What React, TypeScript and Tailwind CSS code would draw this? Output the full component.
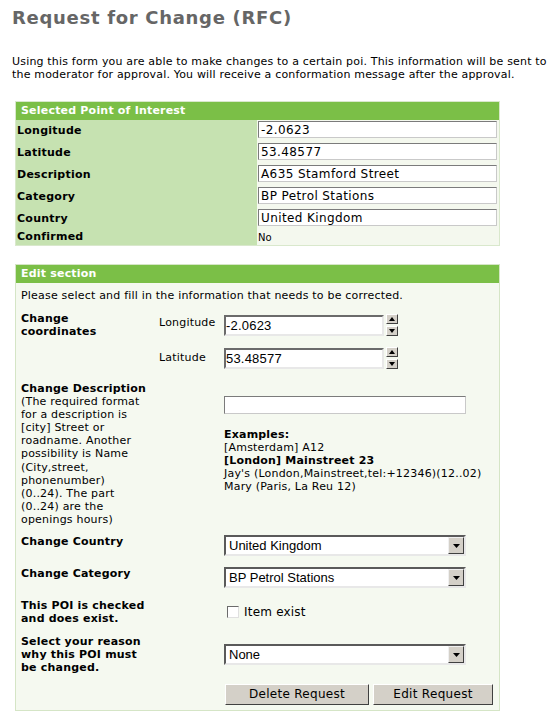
import React from "react";

const verdana = { fontFamily: '"DejaVu Sans", Verdana, sans-serif' };
const arial = { fontFamily: '"Liberation Sans", Arial, sans-serif' };

function InfoRow({ label, value }: { label: string; value: string }) {
  return (
    <div className="flex h-[22px]">
      <div className="w-[241px] bg-[#c6e2b1] pl-[1px] flex items-center font-bold text-[11px] tracking-[0.25px] text-black">
        {label}
      </div>
      <div className="flex-1 bg-[#f4f8ee] pt-[1px] pl-[1px] pr-[2px]">
        <div className="w-full h-[17px] bg-white border border-t-[#7b7b7b] border-l-[#7b7b7b] border-r-[#c9c9c9] border-b-[#c9c9c9] flex items-center pl-[2px] text-[12px] tracking-[0.4px] text-black">
          {value}
        </div>
      </div>
    </div>
  );
}

function SpinInput({ value }: { value: string }) {
  return (
    <div className="flex items-center gap-[2px]">
      <div
        className="w-[160px] h-[21px] bg-white border-2 border-t-[#6b6b6b] border-l-[#6b6b6b] border-r-[#e8e8e8] border-b-[#e8e8e8] flex items-center text-[13px] text-black"
        style={arial}
      >
        {value}
      </div>
      <div className="flex flex-col gap-[2px]">
        <SpinButton up />
        <SpinButton />
      </div>
    </div>
  );
}

function SpinButton({ up }: { up?: boolean }) {
  return (
    <div className="w-[12px] h-[10px] bg-[#d4d0c8] border border-t-white border-l-white border-r-[#404040] border-b-[#404040] flex items-center justify-center">
      <svg width="6" height="4" viewBox="0 0 6 4">
        {up ? <path d="M3 0 L6 4 L0 4 Z" fill="#000" /> : <path d="M0 0 L6 0 L3 4 Z" fill="#000" />}
      </svg>
    </div>
  );
}

function Select({ value }: { value: string }) {
  return (
    <div className="w-[242px] h-[21px] bg-white border-2 border-t-[#5a5a5a] border-l-[#5a5a5a] border-r-[#e8e8e8] border-b-[#e8e8e8] flex items-center">
      <span className="flex-1 pl-[3px] text-[13px] text-black tracking-normal" style={arial}>
        {value}
      </span>
      <div className="w-[16px] h-[17px] bg-[#d4d0c8] border border-t-[#f0f0f0] border-l-[#f0f0f0] border-r-[#404040] border-b-[#404040] flex items-center justify-center">
        <svg width="7" height="4" viewBox="0 0 7 4">
          <path d="M0 0 L7 0 L3.5 4 Z" fill="#000" />
        </svg>
      </div>
    </div>
  );
}

function Button({ label, width }: { label: string; width: string }) {
  return (
    <button
      className={`${width} h-[21px] bg-[#d4d0c8] border border-t-white border-l-white border-r-[#404040] border-b-[#404040] text-[12px] tracking-[0.3px] text-black`}
      style={verdana}
    >
      {label}
    </button>
  );
}

export default function App() {
  return (
    <div className="w-[556px] min-h-[727px] bg-white text-black" style={verdana}>
      <h1 className="pl-[12px] pt-[7px] text-[18px] leading-[22px] tracking-[0.7px] font-bold text-[#666666]">
        Request for Change (RFC)
      </h1>
      <p className="pl-[12px] mt-[26px] text-[11px] leading-[13px] tracking-[0.18px]">
        Using this form you are able to make changes to a certain poi. This information will be sent to
        <br />
        the moderator for approval. You will receive a conformation message after the approval.
      </p>

      {/* selected poi */}
      <div className="ml-[15px] mt-[20px] w-[485px] border border-[#d9e8cc]">
        <div className="h-[18px] bg-[#7bbf47] pl-[5px] flex items-center text-white font-bold text-[11px] tracking-[0.2px]">
          Selected Point of Interest
        </div>
        <InfoRow label="Longitude" value="-2.0623" />
        <InfoRow label="Latitude" value="53.48577" />
        <InfoRow label="Description" value="A635 Stamford Street" />
        <InfoRow label="Category" value="BP Petrol Stations" />
        <InfoRow label="Country" value="United Kingdom" />
        <div className="flex h-[15px]">
          <div className="w-[241px] bg-[#c6e2b1] pl-[1px] flex items-center font-bold text-[11px] tracking-[0.25px]">
            Confirmed
          </div>
          <div className="flex-1 bg-[#f4f8ee] flex items-center pl-[1px] text-[10px]">No</div>
        </div>
      </div>

      {/* edit section */}
      <div className="ml-[15px] mt-[18px] w-[485px] border border-[#d5e5c6] bg-[#f5f9f0]">
        <div className="h-[18px] bg-[#7bbf47] pl-[5px] flex items-center text-white font-bold text-[11px] tracking-[0.2px]">
          Edit section
        </div>
        <div className="pl-[5px] pr-[5px] pt-[6px] pb-[5px] text-[11px] leading-[13px] tracking-[0.2px]">
          <p>Please select and fill in the information that needs to be corrected.</p>

          <div className="mt-[10px] grid grid-cols-[138px_65px_1fr]">
            <div className="font-bold">
              Change
              <br />
              coordinates
            </div>
            <div className="h-[21px] flex items-center">Longitude</div>
            <SpinInput value="-2.0623" />

            <div />
            <div className="mt-[9px] h-[21px] flex items-center">Latitude</div>
            <div className="mt-[9px]">
              <SpinInput value="53.48577" />
            </div>
          </div>

          <div className="mt-[13px] grid grid-cols-[203px_1fr]">
            <div className="leading-[13.1px]">
              <span className="font-bold">Change Description</span>
              <br />
              (The required format
              <br />
              for a description is
              <br />
              [city] Street or
              <br />
              roadname. Another
              <br />
              possibility is Name
              <br />
              (City,street,
              <br />
              phonenumber)
              <br />
              (0..24). The part
              <br />
              (0..24) are the
              <br />
              openings hours)
            </div>
            <div>
              <div className="mt-[14px] w-[242px] h-[18px] bg-white border border-t-[#7b7b7b] border-l-[#7b7b7b] border-r-[#c9c9c9] border-b-[#c9c9c9]" />
              <div className="mt-[14px]">
                <span className="font-bold">Examples:</span>
                <br />
                [Amsterdam] A12
                <br />
                <span className="font-bold">[London] Mainstreet 23</span>
                <br />
                Jay's (London,Mainstreet,tel:+12346)(12..02)
                <br />
                Mary (Paris, La Reu 12)
              </div>
            </div>
          </div>

          <div className="mt-[9px] grid grid-cols-[203px_1fr] items-start">
            <div className="font-bold">Change Country</div>
            <Select value="United Kingdom" />
          </div>

          <div className="mt-[11px] grid grid-cols-[203px_1fr] items-start">
            <div className="font-bold">Change Category</div>
            <Select value="BP Petrol Stations" />
          </div>

          <div className="mt-[11px] grid grid-cols-[203px_1fr] items-center">
            <div className="font-bold">
              This POI is checked
              <br />
              and does exist.
            </div>
            <label className="flex items-center gap-[5px] pl-[3px]">
              <span className="w-[12px] h-[12px] bg-white border border-t-[#6b6b6b] border-l-[#6b6b6b] border-r-[#e0e0e0] border-b-[#e0e0e0]" />
              <span className="text-[12px]">Item exist</span>
            </label>
          </div>

          <div className="mt-[10px] grid grid-cols-[203px_1fr] items-center">
            <div className="font-bold">
              Select your reason
              <br />
              why this POI must
              <br />
              be changed.
            </div>
            <Select value="None" />
          </div>

          <div className="mt-[10px] pl-[204px] flex gap-[4px]">
            <Button label="Delete Request" width="w-[144px]" />
            <Button label="Edit Request" width="w-[120px]" />
          </div>
        </div>
      </div>
    </div>
  );
}
